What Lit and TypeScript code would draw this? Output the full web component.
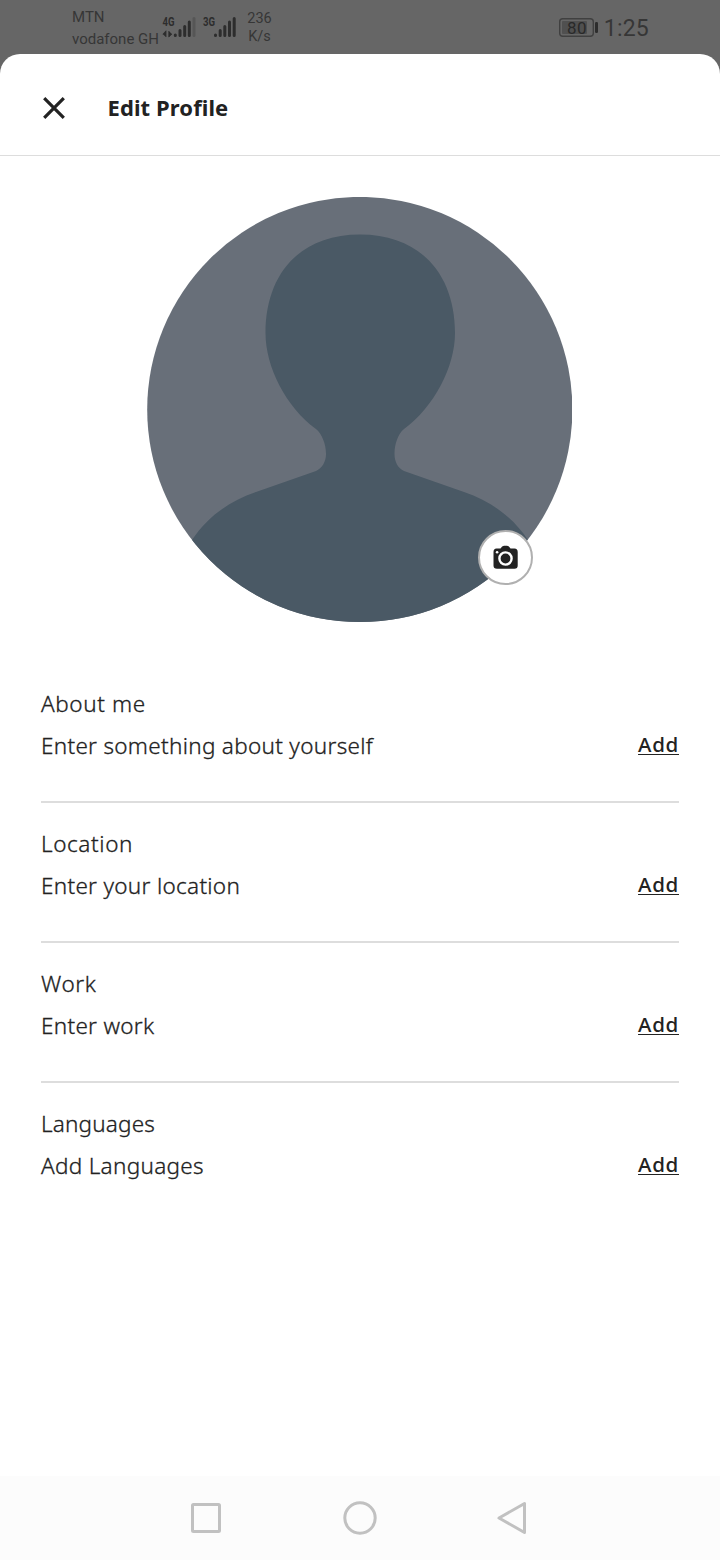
import { LitElement, html, css, svg } from "lit";
import { customElement, property } from "lit/decorators.js";

@customElement("status-bar")
class StatusBar extends LitElement {
  static styles = css`
    :host {
      display: flex;
      justify-content: space-between;
      height: 54px;
      padding: 0 71px 0 72px;
      box-sizing: border-box;
      font-family: Roboto, sans-serif;
      color: #363636;
    }
    .left { display: flex; }
    .carriers { width: 90px; padding-top: 6px; font-size: 15px; line-height: 22px; white-space: nowrap; }
    .signals { display: block; width: 76px; height: 30px; margin-top: 12px; }
    .gen { font: 700 13px Roboto, sans-serif; fill: #2d2d2d; }
    .speed { width: 43px; padding-top: 10px; text-align: center; font-size: 14.500px; line-height: 18px; }
    .right { display: flex; }
    .battery { display: block; width: 40px; height: 20px; margin-top: 18px; }
    .level { font: 400 17px Roboto, sans-serif; fill: #292929; }
    .time { margin-left: 5px; padding-top: 15px; font-size: 23px; line-height: 27px; letter-spacing: 0.200px; }
  `;

  render() {
    return html`
      <div class="left">
        <div class="carriers"><div>MTN</div><div>vodafone GH</div></div>
        <svg class="signals" viewBox="162 12 76 30">
          <text class="gen" x="162.500" y="26" textLength="12" lengthAdjust="spacingAndGlyphs">4G</text>
          <path d="M162.800 34.200L166 30.800V37M168.800 31V37L172 34" fill="#2d2d2d" stroke="#2d2d2d" stroke-width="0.800" />
          <g stroke="#2d2d2d" stroke-width="3" stroke-linecap="round">
            <path d="M175.300 35v.5M180 30.500v5M184.700 26.500v9M189.300 22v13.500" />
            <path d="M194 18.500v17" stroke="#565656" />
            <path d="M215.500 35v.5M220.200 30.500v5M224.800 26.500v9M229.500 22v13.500M234.200 18.500v17" />
          </g>
          <text class="gen" x="203" y="26" textLength="12" lengthAdjust="spacingAndGlyphs">3G</text>
        </svg>
        <div class="speed"><div>236</div><div>K/s</div></div>
      </div>
      <div class="right">
        <svg class="battery" viewBox="559 18 40 20">
          <rect x="559.700" y="18.700" width="33.600" height="17.600" rx="3" fill="none" stroke="#404040" stroke-width="1.400" />
          <rect x="562" y="21" width="25" height="13" rx="1" fill="#505050" />
          <rect x="595" y="22" width="3" height="11" rx="1.200" fill="#2d2d2d" />
          <text class="level" x="567" y="33.500" textLength="19.500">80</text>
        </svg>
        <div class="time">1:25</div>
      </div>
    `;
  }
}

@customElement("profile-avatar")
class ProfileAvatar extends LitElement {
  static styles = css`
    :host { display: block; position: relative; width: 426px; height: 426px; }
    .portrait { display: block; width: 426px; height: 426px; }
    .camera {
      position: absolute;
      left: 331px;
      top: 333px;
      width: 55px;
      height: 55px;
      box-sizing: border-box;
      padding: 0;
      border: 2px solid #b0b0b0;
      border-radius: 50%;
      background: #fff;
    }
    .camera svg { display: block; width: 51px; height: 51px; }
  `;

  render() {
    return html`
      <svg class="portrait" viewBox="147 197 426 426">
        <defs>
          <clipPath id="disc"><circle cx="359.800" cy="409.500" r="212.600" /></clipPath>
          <clipPath id="edge"><rect x="147" y="196" width="425" height="427" /></clipPath>
        </defs>
        <g clip-path="url(#edge)">
          <circle cx="359.800" cy="409.500" r="212.600" fill="#686f79" />
          <path
            clip-path="url(#disc)"
            fill="#4a5965"
            d="M360 234.500C298 234.500 265.500 276 265.500 333C265.500 367 286 407 316 429C322 434 326 444 326 454C326 462 322 468 316 471L256 492C230 501 208 516 192 540V630H528V540C512 516 490 501 464 492L404 471C398 468 394.500 462 394.500 454C394.500 444 398 434 404 429C434 407 455 367 455 333C455 276 422 234.500 360 234.500Z"
          />
        </g>
      </svg>
      <button class="camera" aria-label="Change photo">
        <svg viewBox="480 532 51 51">
          <path fill="#222" d="M496.500 548.500H500.500Q502 545.700 504 545.700H507Q509 545.700 510.500 548.500H514.500Q517.700 548.500 517.700 552V565.500Q517.700 568.800 514.500 568.800H497Q493.500 568.800 493.500 565.500V552Q493.500 548.500 496.500 548.500Z" />
          <circle cx="505.500" cy="558.500" r="6.100" fill="#222" stroke="#fff" stroke-width="2.400" />
          <circle cx="497.100" cy="552.300" r="1.300" fill="#fff" />
        </svg>
      </button>
    `;
  }
}

@customElement("profile-field")
class ProfileField extends LitElement {
  @property() label = "";
  @property() hint = "";

  static styles = css`
    :host {
      display: block;
      height: 140px;
      box-sizing: border-box;
      padding-top: 20px;
      border-bottom: 2px solid #ddd;
      color: #222;
    }
    :host(:last-child) { border-bottom: 0; }
    .label, .hint {
      font-size: 22.500px;
      line-height: 42px;
      font-weight: 300;
      white-space: nowrap;
      -webkit-text-stroke: 0.300px #222;
    }
    .label { letter-spacing: 0.600px; }
    :host(:last-child) .label { letter-spacing: 0.170px; }
    .hint { letter-spacing: 0.300px; }
    .row { display: flex; justify-content: space-between; align-items: flex-start; }
    .add {
      height: 24px;
      margin-top: 7px;
      padding: 0;
      border: 0;
      background: none;
      font: 500 20.500px/24px "Noto Sans", sans-serif;
      letter-spacing: 0.700px;
      color: #222;
      text-decoration: underline;
      text-decoration-thickness: 1px;
      text-underline-offset: 2px;
      text-decoration-skip-ink: none;
    }
  `;

  render() {
    return html`
      <div class="label">${this.label}</div>
      <div class="row">
        <div class="hint">${this.hint}</div>
        <button class="add">Add</button>
      </div>
    `;
  }
}

const FIELDS = [
  { label: "About me", hint: "Enter something about yourself" },
  { label: "Location", hint: "Enter your location" },
  { label: "Work", hint: "Enter work" },
  { label: "Languages", hint: "Add Languages" },
];

@customElement("app-root")
class AppRoot extends LitElement {
  static styles = css`
    :host {
      display: flex;
      flex-direction: column;
      width: 720px;
      height: 1560px;
      background: #666;
      font-family: "Noto Sans", sans-serif;
      color: #222;
      overflow: hidden;
    }
    .sheet {
      flex: 1;
      display: flex;
      flex-direction: column;
      background: #fff;
      border-radius: 20px 20px 0 0;
    }
    .header {
      display: flex;
      align-items: center;
      height: 102px;
      box-sizing: border-box;
      padding: 6px 42px 0;
      border-bottom: 1px solid #ddd;
    }
    .close { width: 24px; height: 24px; padding: 0; border: 0; background: none; }
    .close svg { display: block; }
    .title { margin: 0 0 2px 41.500px; font-size: 22px; font-weight: 700; line-height: 30px; letter-spacing: 0.100px; }
    .avatar { display: flex; justify-content: center; padding: 41px 0 40px; }
    .fields { padding: 0 41px; }
    .nav {
      display: grid;
      grid-template-columns: repeat(3, 36px);
      column-gap: 117px;
      justify-content: center;
      align-items: center;
      height: 84px;
      background: #fcfcfc;
    }
    .nav svg { display: block; fill: none; stroke: #c1c1c1; stroke-width: 3; stroke-linejoin: round; }
  `;

  render() {
    const navIcons = [
      svg`<rect x="3.500" y="4.500" width="27" height="27" rx="1" />`,
      svg`<circle cx="18" cy="18" r="15.200" />`,
      svg`<path d="M29.500 3.500V32.500L4 18Z" />`,
    ];
    return html`
      <status-bar></status-bar>
      <main class="sheet">
        <header class="header">
          <button class="close" aria-label="Close">
            <svg width="24" height="24" viewBox="0 0 24 24">
              <path d="M2.200 2.200L21.800 21.800M21.800 2.200L2.200 21.800" fill="none" stroke="#222" stroke-width="3.200" />
            </svg>
          </button>
          <h1 class="title">Edit Profile</h1>
        </header>
        <div class="avatar"><profile-avatar></profile-avatar></div>
        <section class="fields">
          ${FIELDS.map((f) => html`<profile-field .label=${f.label} .hint=${f.hint}></profile-field>`)}
        </section>
      </main>
      <nav class="nav">
        ${navIcons.map((icon) => html`<svg width="36" height="36" viewBox="0 0 36 36">${icon}</svg>`)}
      </nav>
    `;
  }
}
